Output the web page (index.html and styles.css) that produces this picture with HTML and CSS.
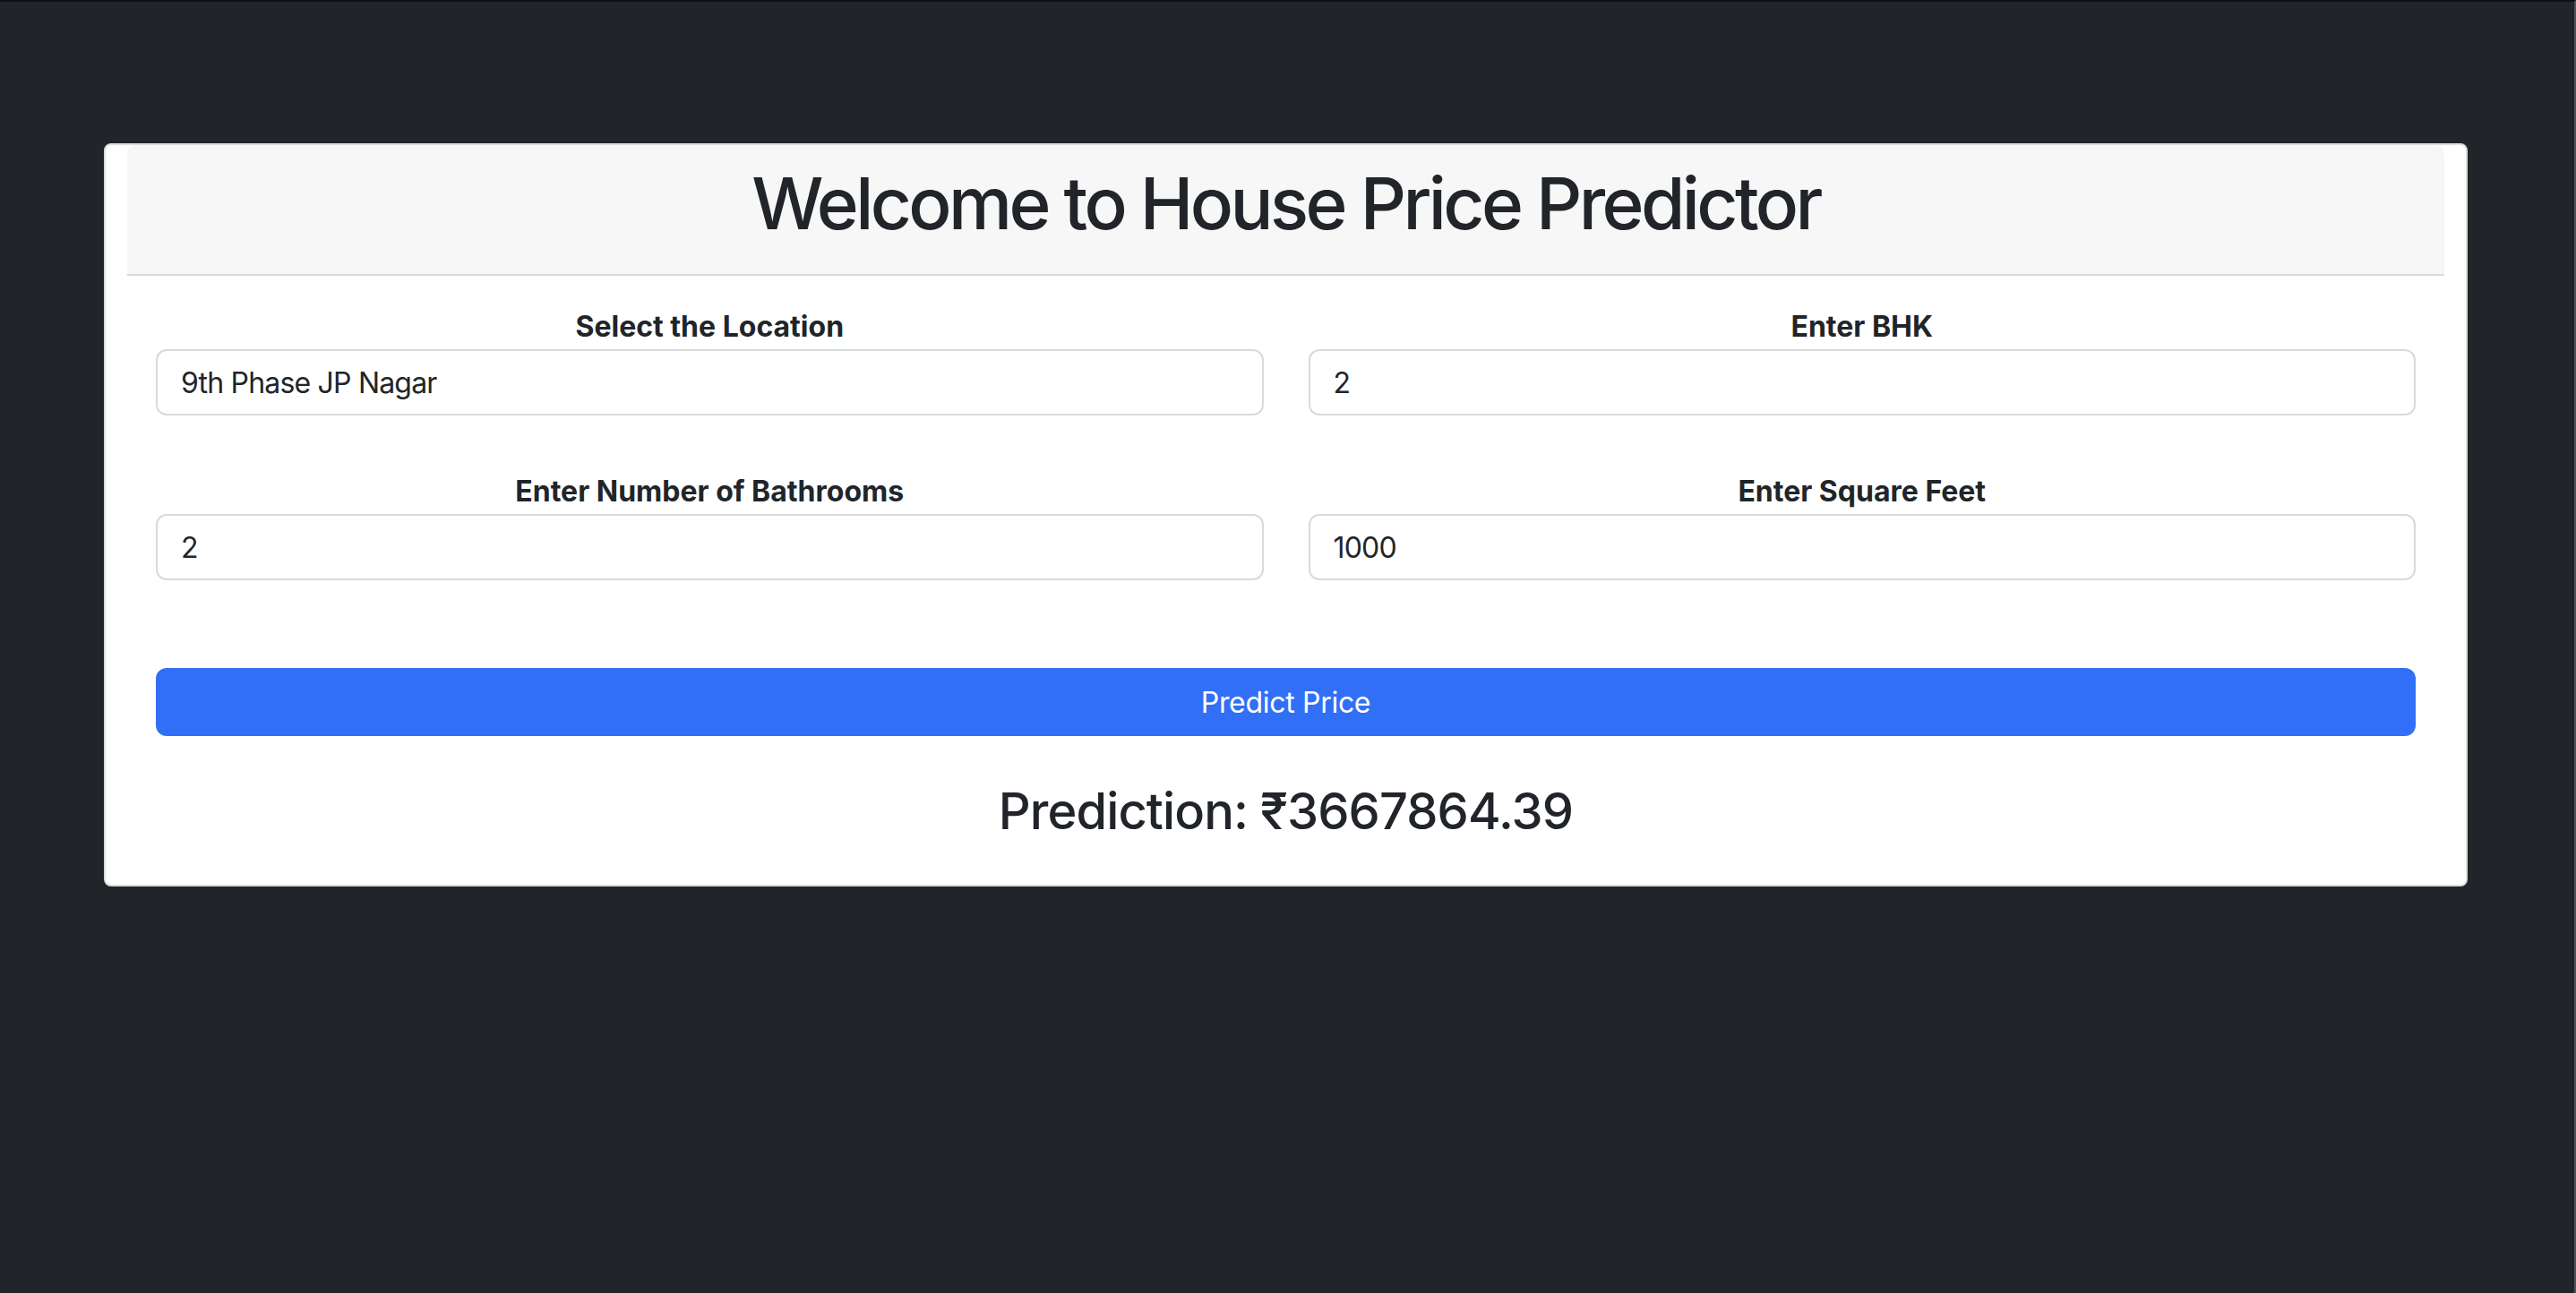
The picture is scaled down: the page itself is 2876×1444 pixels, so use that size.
FILE: index.html
```html
<!DOCTYPE html>
<html lang="en">
<head>
<meta charset="utf-8">
<title>House Price Predictor</title>
<link rel="stylesheet" href="styles.css">
</head>
<body>
<main class="page">
  <section class="card">
    <header class="card-header">
      <h1 class="title">Welcome to House Price Predictor</h1>
    </header>
    <form class="card-body">
      <div class="fields">
        <div class="field">
          <label class="label">Select the Location</label>
          <input class="control" type="text" value="9th Phase JP Nagar">
        </div>
        <div class="field">
          <label class="label">Enter BHK</label>
          <input class="control" type="text" value="2">
        </div>
        <div class="field">
          <label class="label">Enter Number of Bathrooms</label>
          <input class="control" type="text" value="2">
        </div>
        <div class="field">
          <label class="label">Enter Square Feet</label>
          <input class="control" type="text" value="1000">
        </div>
      </div>
      <button class="btn" type="button">Predict Price</button>
      <h3 class="result">Prediction: ₹3667864.39</h3>
    </form>
  </section>
</main>
</body>
</html>
```

FILE: styles.css
```css
* { box-sizing: border-box; }

html, body {
  margin: 0;
  padding: 0;
}

body {
  background: #212529;
  color: #212529;
  font-family: Inter, "Noto Sans", "Liberation Sans", sans-serif;
  min-height: 100vh;
  border-top: 2px solid #0d0f11;
  border-right: 2px solid #50545a;
}

.page {
  padding: 158px 119px 0 116px;
}

.card {
  background: #ffffff;
  border: 2px solid #dcdcdc;
  border-radius: 8px;
  padding: 0 24px;
}

.card-header {
  background: #f7f7f7;
  border-bottom: 2px solid #d9d9d9;
  border-radius: 10px 10px 0 0;
  padding: 17px 32px 16px;
  text-align: center;
}

.title {
  margin: 0 0 15px;
  font-size: 80px;
  line-height: 96px;
  font-weight: 500;
  letter-spacing: -3.6px;
}

.card-body {
  padding: 33px 32px 48px;
}

.fields {
  display: grid;
  grid-template-columns: 1fr 1fr;
  column-gap: 50px;
  row-gap: 61px;
}

.field {
  display: flex;
  flex-direction: column;
}

.label {
  text-align: center;
  font-size: 32px;
  line-height: 48px;
  font-weight: 700;
  margin-bottom: 1px;
  letter-spacing: 0;
}

.control {
  height: 74px;
  border: 2px solid #d7dadd;
  border-radius: 12px;
  padding: 0 26px;
  font-family: inherit;
  font-size: 32px;
  letter-spacing: -0.8px;
  color: #212529;
  background: #fff;
  outline: none;
}

.btn {
  display: block;
  width: 100%;
  height: 76px;
  margin-top: 98px;
  border: none;
  border-radius: 12px;
  background: #316ff6;
  color: #fff;
  font-family: inherit;
  font-size: 32px;
  font-weight: 400;
  letter-spacing: -0.3px;
}

.result {
  margin: 51px 0 0;
  text-align: center;
  font-size: 56px;
  line-height: 67px;
  font-weight: 500;
  letter-spacing: -0.9px;
}
```
